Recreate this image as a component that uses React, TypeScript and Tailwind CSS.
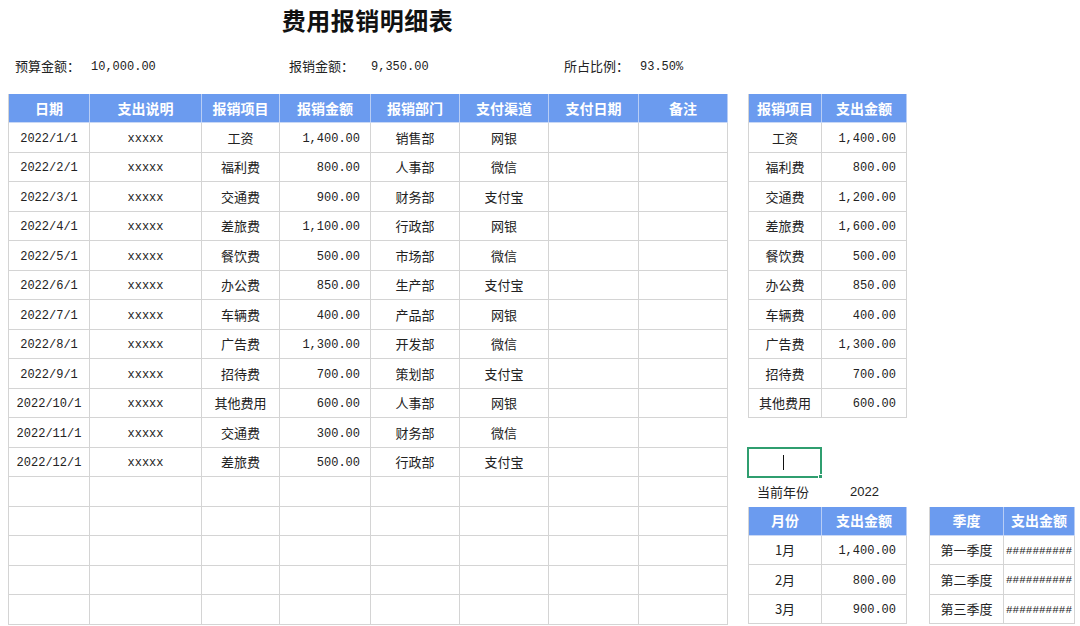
import React from "react";

const CJK = "font-['Noto_Sans_CJK_SC',sans-serif]";
const MONOF = "font-['Liberation_Mono','Noto_Sans_CJK_SC',monospace]";
const MONO = `${MONOF} pt-[3px] text-[12px]`;

type Row = { d: string; item: string; amt: string; dept: string; ch: string };

const rows: Row[] = [
  { d: "2022/1/1", item: "工资", amt: "1,400.00", dept: "销售部", ch: "网银" },
  { d: "2022/2/1", item: "福利费", amt: "800.00", dept: "人事部", ch: "微信" },
  { d: "2022/3/1", item: "交通费", amt: "900.00", dept: "财务部", ch: "支付宝" },
  { d: "2022/4/1", item: "差旅费", amt: "1,100.00", dept: "行政部", ch: "网银" },
  { d: "2022/5/1", item: "餐饮费", amt: "500.00", dept: "市场部", ch: "微信" },
  { d: "2022/6/1", item: "办公费", amt: "850.00", dept: "生产部", ch: "支付宝" },
  { d: "2022/7/1", item: "车辆费", amt: "400.00", dept: "产品部", ch: "网银" },
  { d: "2022/8/1", item: "广告费", amt: "1,300.00", dept: "开发部", ch: "微信" },
  { d: "2022/9/1", item: "招待费", amt: "700.00", dept: "策划部", ch: "支付宝" },
  { d: "2022/10/1", item: "其他费用", amt: "600.00", dept: "人事部", ch: "网银" },
  { d: "2022/11/1", item: "交通费", amt: "300.00", dept: "财务部", ch: "微信" },
  { d: "2022/12/1", item: "差旅费", amt: "500.00", dept: "行政部", ch: "支付宝" },
];

const summary: [string, string][] = [
  ["工资", "1,400.00"],
  ["福利费", "800.00"],
  ["交通费", "1,200.00"],
  ["差旅费", "1,600.00"],
  ["餐饮费", "500.00"],
  ["办公费", "850.00"],
  ["车辆费", "400.00"],
  ["广告费", "1,300.00"],
  ["招待费", "700.00"],
  ["其他费用", "600.00"],
];

const mainCols = "grid grid-cols-[81px_112px_78px_91px_89px_89px_90px_89px]";
const headers = ["日期", "支出说明", "报销项目", "报销金额", "报销部门", "支付渠道", "支付日期", "备注"];

const hCell = `flex items-center justify-center h-full border-r border-[#b8cdf5] text-white text-[14px] font-bold ${CJK}`;
const cell = "flex items-center h-full min-w-0 border-r border-[#d4d4d4] text-[#222]";
const cjkCell = `${cell} justify-center text-[13px] ${CJK}`;

function MainTable() {
  const empty = Array.from({ length: 5 });
  return (
    <div className="w-[720px] border-l border-[#d4d4d4]">
      <div className={`${mainCols} h-[29px] bg-[#6b9bef] border-b border-[#c9d8f5]`}>
        {headers.map((h) => (
          <div key={h} className={hCell}>{h}</div>
        ))}
      </div>
      {rows.map((r) => (
        <div key={r.d} className={`${mainCols} h-[29.5px] border-b border-[#d4d4d4]`}>
          <div className={`${cell} justify-center ${MONO}`}>{r.d}</div>
          <div className={`${cell} justify-center ${MONO}`}>xxxxx</div>
          <div className={cjkCell}>{r.item}</div>
          <div className={`${cell} justify-end pr-[10px] ${MONO}`}>{r.amt}</div>
          <div className={cjkCell}>{r.dept}</div>
          <div className={cjkCell}>{r.ch}</div>
          <div className={cell}></div>
          <div className={cell}></div>
        </div>
      ))}
      {empty.map((_, i) => (
        <div key={i} className={`${mainCols} h-[29.5px] border-b border-[#d4d4d4]`}>
          {headers.map((h) => (
            <div key={h} className={cell}></div>
          ))}
        </div>
      ))}
    </div>
  );
}

function SmallTable({
  cols,
  heads,
  data,
  numCls,
}: {
  cols: string;
  heads: [string, string];
  data: [string, string][];
  numCls: string;
}) {
  return (
    <div className="border-l border-[#d4d4d4]">
      <div className={`grid ${cols} h-[29px] bg-[#6b9bef] border-b border-[#c9d8f5]`}>
        <div className={hCell}>{heads[0]}</div>
        <div className={hCell}>{heads[1]}</div>
      </div>
      {data.map(([a, b]) => (
        <div key={a} className={`grid ${cols} h-[29.5px] border-b border-[#d4d4d4]`}>
          <div className={cjkCell}>{a}</div>
          <div className={`${cell} ${numCls}`}>{b}</div>
        </div>
      ))}
    </div>
  );
}

export default function App() {
  return (
    <div className={`w-[1080px] h-[626px] overflow-hidden bg-white ${CJK}`}>
      <div className="h-[42px] w-[735px] pt-[5px] flex justify-center">
        <div className="text-[24px] leading-[30px] font-bold text-[#111] tracking-[0.5px]">
          费用报销明细表
        </div>
      </div>
      <div className="h-[52px] pt-[15px] pl-[15px] flex items-start text-[13px] leading-[18px] text-[#222]">
        <div className="w-[274px] flex items-center h-[18px]">
          <span className="w-[76px]">预算金额：</span>
          <span className={`${MONOF} text-[12px] pt-[1px]`}>10,000.00</span>
        </div>
        <div className="w-[275px] flex items-center h-[18px]">
          <span className="w-[82px]">报销金额：</span>
          <span className={`${MONOF} text-[12px] pt-[1px]`}>9,350.00</span>
        </div>
        <div className="flex items-center h-[18px]">
          <span className="w-[76px]">所占比例：</span>
          <span className={`${MONOF} text-[12px] pt-[1px]`}>93.50%</span>
        </div>
      </div>
      <div className="flex items-start">
        <div className="ml-[8px]">
          <MainTable />
        </div>
        <div className="ml-[20px] flex flex-col">
          <div className="w-[159px]">
            <SmallTable
              cols="grid-cols-[73px_85px]"
              heads={["报销项目", "支出金额"]}
              data={summary}
              numCls={`justify-end pr-[10px] ${MONO}`}
            />
          </div>
          <div className="h-[29.5px]"></div>
          <div className="h-[29.5px] relative">
            <div className="absolute left-[-1px] top-[-1px] w-[75px] h-[31px] border-2 border-[#2f9e6f] flex items-center">
              <div className="ml-[34px] w-px h-[15px] bg-[#111]"></div>
              <div className="absolute right-[-3px] bottom-[-3px] w-[5px] h-[5px] bg-[#2f9e6f] border border-white"></div>
            </div>
          </div>
          <div className="h-[29.5px] flex items-center text-[13px] text-[#222]">
            <span className="ml-[9px] w-[93px]">当前年份</span>
            <span className="font-['Liberation_Sans',sans-serif] text-[13px]">2022</span>
          </div>
          <div className="flex items-start">
            <div className="w-[159px]">
              <SmallTable
                cols="grid-cols-[73px_85px]"
                heads={["月份", "支出金额"]}
                data={[
                  ["1月", "1,400.00"],
                  ["2月", "800.00"],
                  ["3月", "900.00"],
                ]}
                numCls={`justify-end pr-[10px] ${MONO}`}
              />
            </div>
            <div className="ml-[22px] w-[146px]">
              <SmallTable
                cols="grid-cols-[74px_71px]"
                heads={["季度", "支出金额"]}
                data={[
                  ["第一季度", "##########"],
                  ["第二季度", "##########"],
                  ["第三季度", "##########"],
                ]}
                numCls="justify-center pt-[2px] font-['Liberation_Mono',monospace] text-[11px] whitespace-nowrap overflow-hidden"
              />
            </div>
          </div>
        </div>
      </div>
    </div>
  );
}
